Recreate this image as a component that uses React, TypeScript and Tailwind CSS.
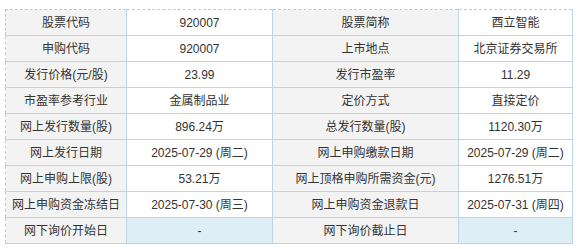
const rows: [string, string, string, string][] = [
  ['股票代码', '920007', '股票简称', '酉立智能'],
  ['申购代码', '920007', '上市地点', '北京证券交易所'],
  ['发行价格(元/股)', '23.99', '发行市盈率', '11.29'],
  ['市盈率参考行业', '金属制品业', '定价方式', '直接定价'],
  ['网上发行数量(股)', '896.24万', '总发行数量(股)', '1120.30万'],
  ['网上发行日期', '2025-07-29 (周二)', '网上申购缴款日期', '2025-07-29 (周二)'],
  ['网上申购上限(股)', '53.21万', '网上顶格申购所需资金(元)', '1276.51万'],
  ['网上申购资金冻结日', '2025-07-30 (周三)', '网上申购资金退款日', '2025-07-31 (周四)'],
  ['网下询价开始日', '-', '网下询价截止日', '-'],
]

export default function App() {
  return (
    <div
      className="w-[579px] h-[249px] bg-white pt-[9px] pl-[5px] text-[12px] text-[#333]"
      style={{ fontFamily: '"Liberation Sans", Arial, "Noto Sans CJK SC", sans-serif' }}
    >
      <table className="table-fixed border-collapse w-[567px]">
        <colgroup>
          <col className="w-[121px]" />
          <col className="w-[146px]" />
          <col className="w-[186px]" />
          <col className="w-[114px]" />
        </colgroup>
        <tbody>
          {rows.map((r, i) => {
            const first = i === 0
            const last = i === rows.length - 1
            const valueBg = last ? 'bg-[#deeef7]' : 'bg-white'
            // top edge of the table is a dashed grey line
            const top = first ? 'border-t-[#c8c8c8] [border-top-style:dashed]' : ''
            const cell = 'border border-[#bad5ea] text-center p-0 whitespace-nowrap'
            return (
              <tr key={i} className="h-[26px]">
                <td className={`${cell} bg-[#f3f3f3] border-l-[#c8c8c8] [border-left-style:dashed] ${top}`}>
                  {r[0]}
                </td>
                <td className={`${cell} ${valueBg} ${top}`}>{r[1]}</td>
                <td className={`${cell} bg-[#f3f3f3] ${top}`}>{r[2]}</td>
                <td className={`${cell} ${valueBg} ${top}`}>{r[3]}</td>
              </tr>
            )
          })}
        </tbody>
      </table>
    </div>
  )
}
